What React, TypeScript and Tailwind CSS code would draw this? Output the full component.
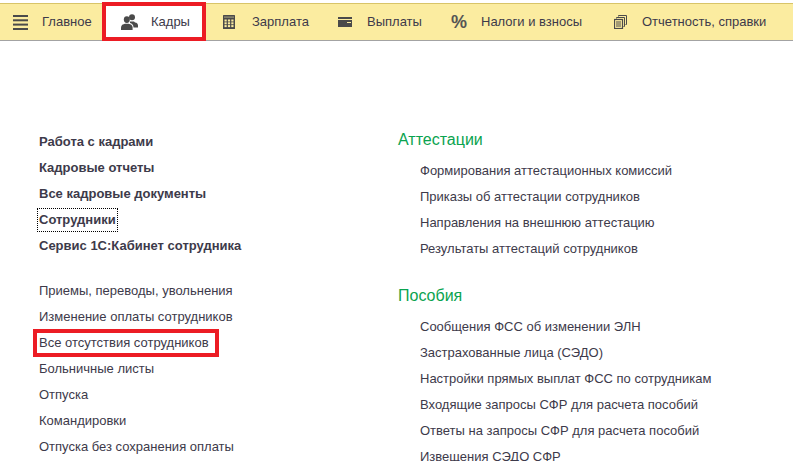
import React from "react";

const Text = "text-[#3d3a4a]";

function TabIcon({ name }: { name: string }) {
  const c = "#4a4a4a";
  const y = "#fbeca0";
  if (name === "menu")
    return (
      <svg width="15" height="15" viewBox="0 0 15 15" fill={c}>
        <rect x="0" y="0" width="15" height="2" />
        <rect x="0" y="4.3" width="15" height="2" />
        <rect x="0" y="8.6" width="15" height="2" />
        <rect x="0" y="13" width="15" height="2" />
      </svg>
    );
  if (name === "people")
    return (
      <svg width="17" height="16" viewBox="0 0 17 16" fill={c}>
        <circle cx="11" cy="3.2" r="3" />
        <path d="M9 7.5 H13 L14 8.5 C16 8.7 17 10 17 11.5 V13.5 H12.5 C12.5 11 11 9.5 9 9 Z" />
        <ellipse cx="5.8" cy="5.6" rx="3" ry="3.4" />
        <path d="M0 16 V13.5 C0 11 2 10.3 4 9.8 H7.6 C9.6 10.3 11.6 11 11.6 13.5 V16 Z" />
      </svg>
    );
  if (name === "calc")
    return (
      <svg width="12" height="14" viewBox="0 0 12 14">
        <rect x="0" y="0" width="12" height="14" rx="0.5" fill={c} />
        <rect x="1" y="1.5" width="10" height="1.2" fill="#9a9678" />
        {[4.5, 7.3, 10.1].map((yy) =>
          [1.5, 4.9, 8.3].map((x) => <rect key={`${x}-${yy}`} x={x} y={yy} width="2.2" height="2" fill={y} />)
        )}
      </svg>
    );
  if (name === "card")
    return (
      <svg width="14" height="10" viewBox="0 0 14 10">
        <rect x="0" y="0" width="14" height="10" fill={c} />
        <rect x="0" y="2" width="14" height="1" fill={y} />
        <rect x="9" y="5" width="4" height="1" fill={y} />
      </svg>
    );
  if (name === "percent")
    return <span className="w-[15px] text-[18px] leading-none font-bold text-[#555]">%</span>;
  return (
    <svg width="13" height="14" viewBox="0 0 13 14" fill="none" stroke={c}>
      <path d="M4.5 1.5 V0.5 H12.5 V9.5 H11.5" />
      <path d="M2.5 3.5 V2.5 H10.5 V11.5 H9.5" />
      <rect x="0.5" y="4.5" width="8" height="9" fill={y} strokeWidth="1.2" />
      <path d="M2 7 H7 M2 9 H7 M2 11 H7" />
    </svg>
  );
}

const tabs = [
  { icon: "menu", label: "Главное", w: "w-[102px]", pl: "pl-[13px]", gap: "gap-[14px]" },
  { icon: "people", label: "Кадры", w: "w-[104px]", pl: "pl-[19px]", gap: "gap-[13px]", active: true },
  { icon: "calc", label: "Зарплата", w: "w-[116px]", pl: "pl-[17px]", gap: "gap-[17px]" },
  { icon: "card", label: "Выплаты", w: "w-[116px]", pl: "pl-[16px]", gap: "gap-[15px]" },
  { icon: "percent", label: "Налоги и взносы", w: "w-[163px]", pl: "pl-[13px]", gap: "gap-[15px]" },
  { icon: "doc", label: "Отчетность, справки", w: "w-[182px]", pl: "pl-[13px]", gap: "gap-[15px]" },
];

const boldRows = ["Работа с кадрами", "Кадровые отчеты", "Все кадровые документы", "Сотрудники", "Сервис 1С:Кабинет сотрудника"];
const leftRows = [
  "Приемы, переводы, увольнения",
  "Изменение оплаты сотрудников",
  "Все отсутствия сотрудников",
  "Больничные листы",
  "Отпуска",
  "Командировки",
  "Отпуска без сохранения оплаты",
];
const groups = [
  { title: "Аттестации", items: ["Формирования аттестационных комиссий", "Приказы об аттестации сотрудников", "Направления на внешнюю аттестацию", "Результаты аттестаций сотрудников"] },
  { title: "Пособия", items: ["Сообщения ФСС об изменении ЭЛН", "Застрахованные лица (СЭДО)", "Настройки прямых выплат ФСС по сотрудникам", "Входящие запросы СФР для расчета пособий", "Ответы на запросы СФР для расчета пособий", "Извещения СЭДО СФР"] },
];

export default function App() {
  return (
    <div className={`h-[461px] w-[793px] overflow-hidden bg-white font-['Liberation_Sans',Arial,sans-serif] text-[13px] ${Text}`}>
      <div className="mt-[3px] flex h-[38px] border-y border-t-[#d8c468] border-b-[#a3a3a3] bg-[#fbeca0]">
        {tabs.map((t) => (
          <div
            key={t.label}
            className={`relative flex shrink-0 items-center ${t.w} ${t.pl} ${t.gap} ${t.active ? "bg-white" : ""}`}
          >
            <TabIcon name={t.icon} />
            <span>{t.label}</span>
            {t.active && <div className="absolute inset-x-0 top-[-2px] bottom-[-1px] border-4 border-[#ec1c24]" />}
          </div>
        ))}
      </div>
      <div className="flex pt-[88px]">
        <div className="w-[398px] shrink-0 pl-[39px]">
          <div className="flex flex-col font-bold">
            {boldRows.map((r) => (
              <div key={r} className="flex h-[26px] items-center">
                <span className="relative">
                  {r}
                  {r === "Сотрудники" && <span className="absolute inset-x-[-2px] inset-y-[-2px] border border-dotted border-black" />}
                </span>
              </div>
            ))}
          </div>
          <div className="mt-[19px] flex flex-col">
            {leftRows.map((r) => (
              <div key={r} className="flex h-[26px] items-center">
                <span className={r.startsWith("Все") ? "relative" : ""}>
                  {r}
                  {r.startsWith("Все") && <span className="absolute top-[-4px] bottom-[-4px] left-[-6px] right-[-10px] border-[4px] border-[#ec1c24]" />}
                </span>
              </div>
            ))}
          </div>
        </div>
        <div className="-mt-[2px] flex flex-col">
          {groups.map((g) => (
            <div key={g.title} className="mb-[21px]">
              <div className="mb-[5px] flex h-[26px] items-center text-[16px] text-[#0aa34f]">{g.title}</div>
              {g.items.map((i) => (
                <div key={i} className="flex h-[26px] items-center whitespace-nowrap pl-[22px]">{i}</div>
              ))}
            </div>
          ))}
        </div>
      </div>
    </div>
  );
}
